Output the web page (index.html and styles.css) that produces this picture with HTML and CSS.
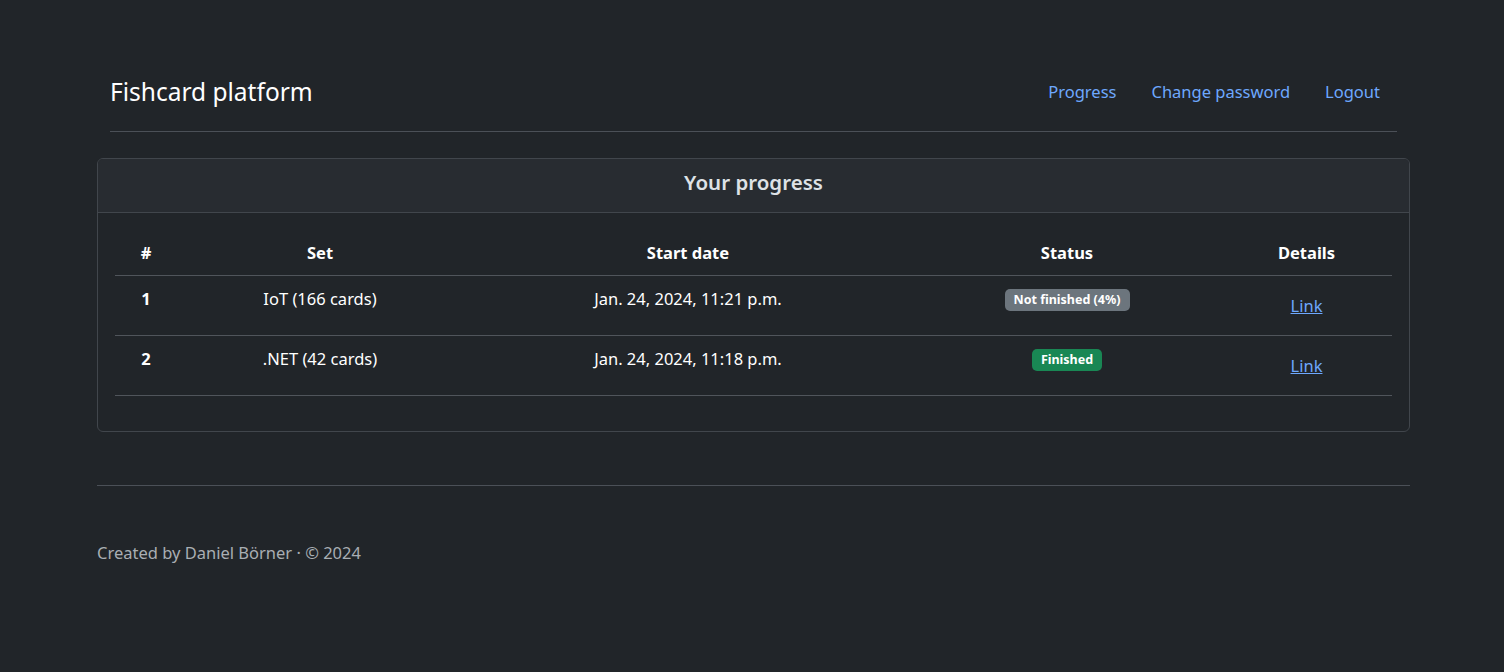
FILE: index.html
```html
<!DOCTYPE html>
<html lang="en">
<head>
<meta charset="utf-8">
<title>Fishcard platform</title>
<link rel="stylesheet" href="styles.css">
</head>
<body>
<div class="page">
  <header class="site-header">
    <span class="brand">Fishcard platform</span>
    <nav class="nav">
      <a class="nav-link" href="#">Progress</a>
      <a class="nav-link" href="#">Change password</a>
      <a class="nav-link" href="#">Logout</a>
    </nav>
  </header>

  <main class="card">
    <div class="card-header">Your progress</div>
    <div class="card-body">
      <table class="table">
        <colgroup>
          <col class="c-num"><col class="c-set"><col class="c-date"><col class="c-status"><col class="c-details">
        </colgroup>
        <thead>
          <tr><th>#</th><th>Set</th><th>Start date</th><th>Status</th><th>Details</th></tr>
        </thead>
        <tbody>
          <tr>
            <td class="num">1</td>
            <td>IoT (166 cards)</td>
            <td>Jan. 24, 2024, 11:21 p.m.</td>
            <td><span class="badge badge-secondary">Not finished (4%)</span></td>
            <td><a class="link" href="#">Link</a></td>
          </tr>
          <tr>
            <td class="num">2</td>
            <td>.NET (42 cards)</td>
            <td>Jan. 24, 2024, 11:18 p.m.</td>
            <td><span class="badge badge-success">Finished</span></td>
            <td><a class="link" href="#">Link</a></td>
          </tr>
        </tbody>
      </table>
    </div>
  </main>

  <footer class="footer">
    <hr class="footer-rule">
    <p class="footer-text">Created by Daniel Börner · © 2024</p>
  </footer>
</div>
</body>
</html>
```

FILE: styles.css
```css
* { box-sizing: border-box; }

html, body {
  margin: 0;
  padding: 0;
  background: #212529;
}

body {
  font-family: "Noto Sans", "Open Sans", "DejaVu Sans", sans-serif;
  font-size: 16.5px;
  line-height: 24px;
  color: #dee2e6;
}

.page {
  width: 1313px;
  margin: 0 94px 0 97px;
}

.site-header {
  display: flex;
  align-items: center;
  justify-content: space-between;
  margin: 56px 13px 26px 13px;
  padding: 16px 0 19px 0;
  border-bottom: 1px solid #4b5057;
}

.brand {
  font-size: 24.5px;
  line-height: 40px;
  color: #ffffff;
}

.nav {
  display: flex;
}

.nav-link {
  display: block;
  padding: 8px 17px 8px 18px;
  color: #6ea8fe;
  text-decoration: none;
}

.card {
  display: block;
  border: 1px solid #41464c;
  border-radius: 6px;
  overflow: hidden;
}

.card-header {
  background: #282c31;
  border-bottom: 1px solid #41464c;
  text-align: center;
  font-size: 20.5px;
  font-weight: 600;
  line-height: 30px;
  padding: 8px 16px 15px;
  color: #dee2e6;
}

.card-body {
  padding: 16px 17px;
}

.table {
  width: 100%;
  border-collapse: collapse;
  table-layout: fixed;
  margin-bottom: 19px;
  color: #ffffff;
}

.c-num { width: 62px; }
.c-set { width: 286px; }
.c-date { width: 450px; }
.c-status { width: 308px; }
.c-details { width: 171px; }

.table th {
  font-weight: 700;
  text-align: center;
  padding: 12px 8px 10px;
  border-bottom: 1px solid #50555b;
}

.table td {
  text-align: center;
  vertical-align: top;
  padding: 11px 8px 12px;
  border-bottom: 1px solid #50555b;
}

.table td.num {
  font-weight: 700;
}

.badge {
  display: inline-block;
  font-size: 12.5px;
  font-weight: 700;
  line-height: 14px;
  padding: 4px 9px;
  border-radius: 5px;
  color: #ffffff;
  vertical-align: 1px;
}

.badge-secondary { background: #6c757d; }
.badge-success { background: #198754; }

.link {
  display: inline-block;
  padding: 7px 0 5px;
  color: #6ea8fe;
  text-decoration: underline;
}

.footer {
  padding-top: 53px;
}

.footer-rule {
  margin: 0;
  border: 0;
  border-top: 1px solid #4b5057;
}

.footer-text {
  margin: 55px 0 0 0;
  color: #a9aeb3;
}
```
